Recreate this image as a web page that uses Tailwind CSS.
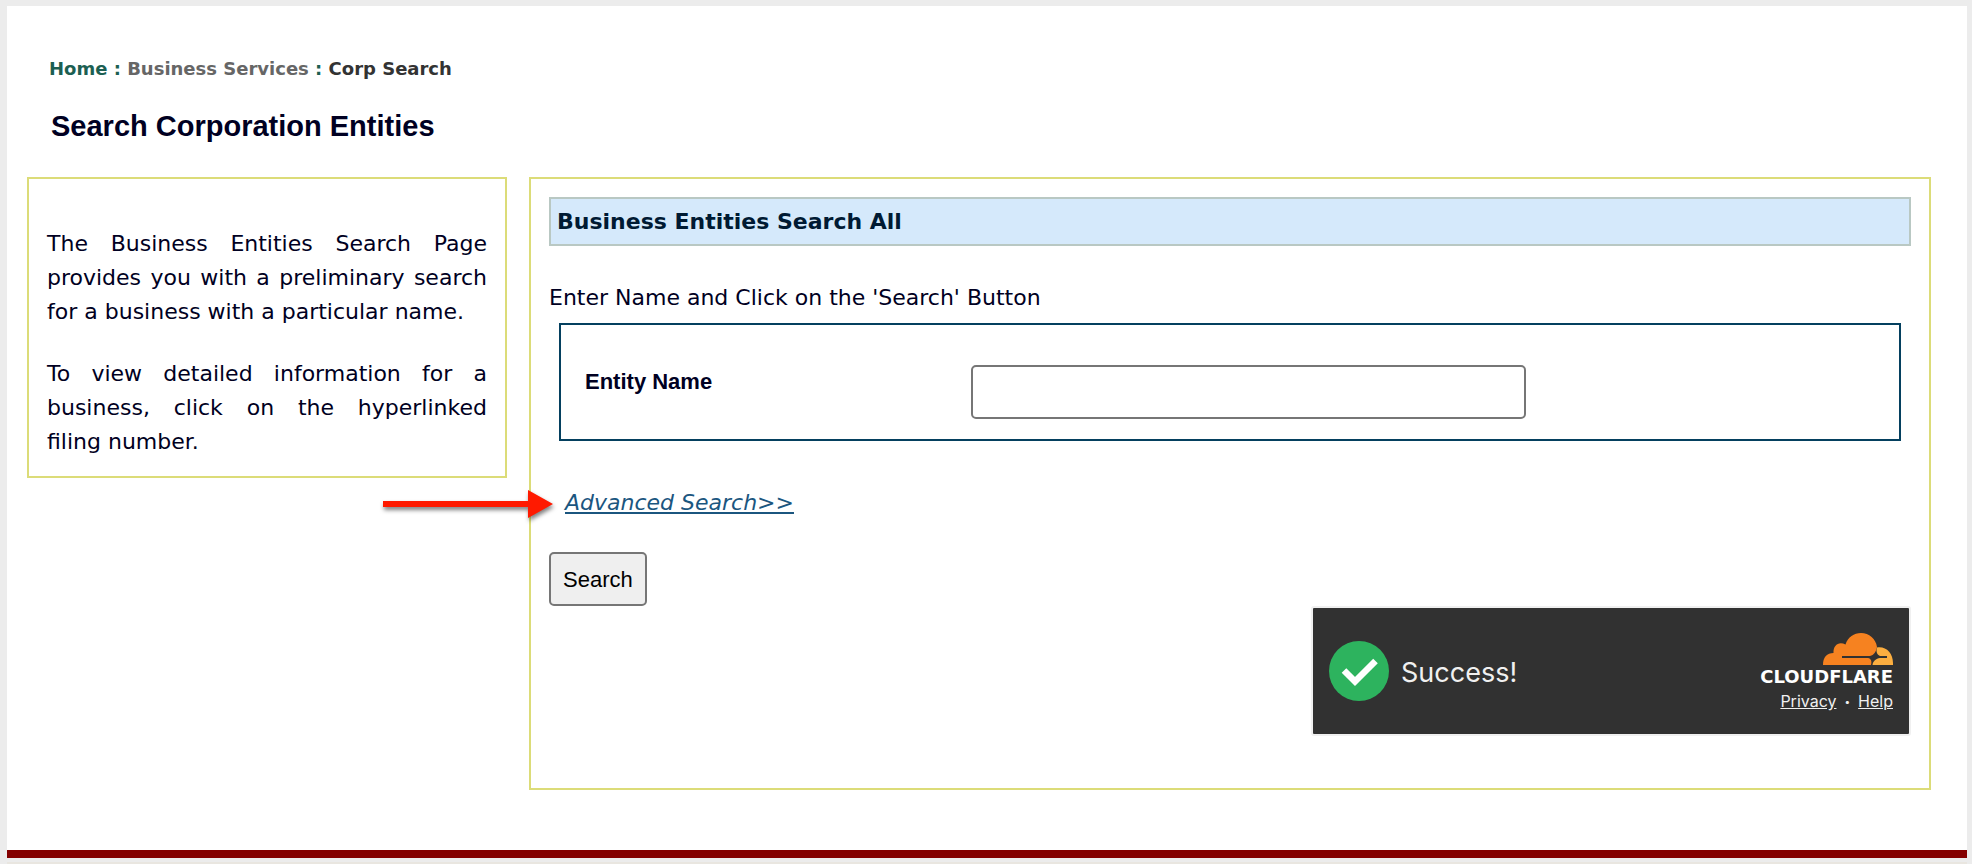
<!DOCTYPE html>
<html lang="en">
<head>
  <meta charset="UTF-8" />
  <meta name="viewport" content="width=device-width, initial-scale=1.0"/>
  <title>Search Corporation Entities</title>
  <script src="https://cdn.jsdelivr.net/npm/@tailwindcss/browser@4"></script>
</head>
<body class="bg-[#ececec] min-h-screen pl-[7px] pt-[6px] pr-[5px] font-['DejaVu_Sans',Verdana,sans-serif] text-[#000022]">

  <!-- Page -->
  <main class="bg-white border-b-8 border-[#840000] pt-[50px] pl-5 pr-9 pb-[60px]">

    <!-- Breadcrumb -->
    <nav aria-label="Breadcrumb" class="pl-[22px] text-[18px] leading-[26px] font-bold text-[#1c5f52]">
      <a href="#">Home</a> :
      <a href="#" class="text-[#666666]">Business Services</a> :
      <span class="text-[#333333]">Corp Search</span>
    </nav>

    <h1 class="pl-6 mt-7 text-[29px] leading-8 font-bold font-['Liberation_Sans',Arial,sans-serif]">Search Corporation Entities</h1>

    <div class="flex items-start gap-[22px] mt-[35px]">

      <!-- Help Text -->
      <aside class="w-[480px] shrink-0 border-2 border-[#dcdc78] px-[18px] pt-12 pb-[17px] text-[22px] leading-[34px] text-justify">
        <p>The Business Entities Search Page provides you with a preliminary search for a business with a particular name.</p>
        <p class="mt-7">To view detailed information for a business, click on the hyperlinked filing&nbsp;number.</p>
      </aside>

      <!-- Search Form -->
      <form class="flex-1 border-2 border-[#dcdc78] p-[18px] pb-[52px]">
        <h2 class="border-2 border-[#b9c8c3] bg-[#d5e9fb] px-[6px] text-[22px] leading-[45px] font-bold text-[#001a33]">Business Entities Search All</h2>

        <p class="mt-[35px] text-[22px] leading-[34px]">Enter Name and Click on the 'Search' Button</p>

        <div class="flex items-start mx-[10px] mt-2 border-2 border-[#04405f] pl-6 pr-6 pt-10 pb-5">
          <label for="entityName" class="w-[386px] shrink-0 text-[22px] leading-[34px] font-bold font-['Liberation_Sans',Arial,sans-serif]">Entity Name</label>
          <input id="entityName" type="text"
            class="w-full max-w-[555px] h-[54px] border-2 border-[#767676] rounded-[5px] px-2 text-[22px]" />
        </div>

        <div class="relative mt-[45px] pl-4 text-[22px] leading-[34px]">
          <a href="#" class="italic underline text-[#1b567f]">Advanced Search&gt;&gt;</a>

          <!-- Pointer Arrow -->
          <svg class="absolute -left-[170px] top-0 w-[180px] h-10 overflow-visible drop-shadow-[1px_3px_2px_rgba(0,0,0,0.5)]" viewBox="0 0 180 40" fill="#ff1a00" aria-hidden="true">
            <path d="M4 15H149V4L174 18L149 32V21H4Z" />
          </svg>
        </div>

        <button type="submit"
          class="block mt-8 h-[54px] px-3 border-2 border-[#767676] rounded-[5px] bg-[#efefef] text-black text-[22px] font-['Liberation_Sans',Arial,sans-serif]">
          Search
        </button>

        <!-- Turnstile -->
        <div class="flex items-center ml-auto w-[600px] h-[130px] border-2 border-[#f0f0f0] rounded-[3px] bg-[#313131] px-4 text-[#f0f0f0] font-[Inter,sans-serif]">
          <svg class="w-[60px] h-[60px] shrink-0" viewBox="0 0 60 60" aria-hidden="true">
            <circle cx="30" cy="30" r="30" fill="#2db35e" />
            <path d="M15 29.500L26 40.500L46.500 20" fill="none" stroke="#fff" stroke-width="6.500" />
          </svg>
          <span class="ml-3 pt-1 text-[27px]">Success!</span>
          <div class="ml-auto pt-1 flex flex-col items-end">
            <svg class="w-[70px] h-8" viewBox="0 0 70 32" aria-hidden="true">
              <path d="M0 32C0 24 4 20 10.500 20C10 12 16 8 22.500 11.500C25 4 31 0 38 0C46 0 53 6 54 14C53 19 51 22 47 23H19V25H45C48 25.500 49 28 48 32Z" fill="#f68220" />
              <path d="M54 14.500C63 13 70 20 70 30V32H49.500C50 28 53 25.500 57 25H64V23H57C53.500 21.500 53 18 54 14.500Z" fill="#fbae40" />
            </svg>
            <span class="mt-[2px] text-[18px] leading-5 font-bold text-white font-['DejaVu_Sans',sans-serif]">CLOUDFLARE</span>
            <div class="mt-[2px] flex items-center gap-2 text-[16px] leading-6">
              <a href="#" class="underline">Privacy</a>
              <span class="text-[10px]">•</span>
              <a href="#" class="underline">Help</a>
            </div>
          </div>
        </div>
      </form>
    </div>
  </main>

  <!-- Footer Strip -->
  <footer class="mt-1 h-[2px] bg-[#e9e6e0]"></footer>

</body>
</html>
